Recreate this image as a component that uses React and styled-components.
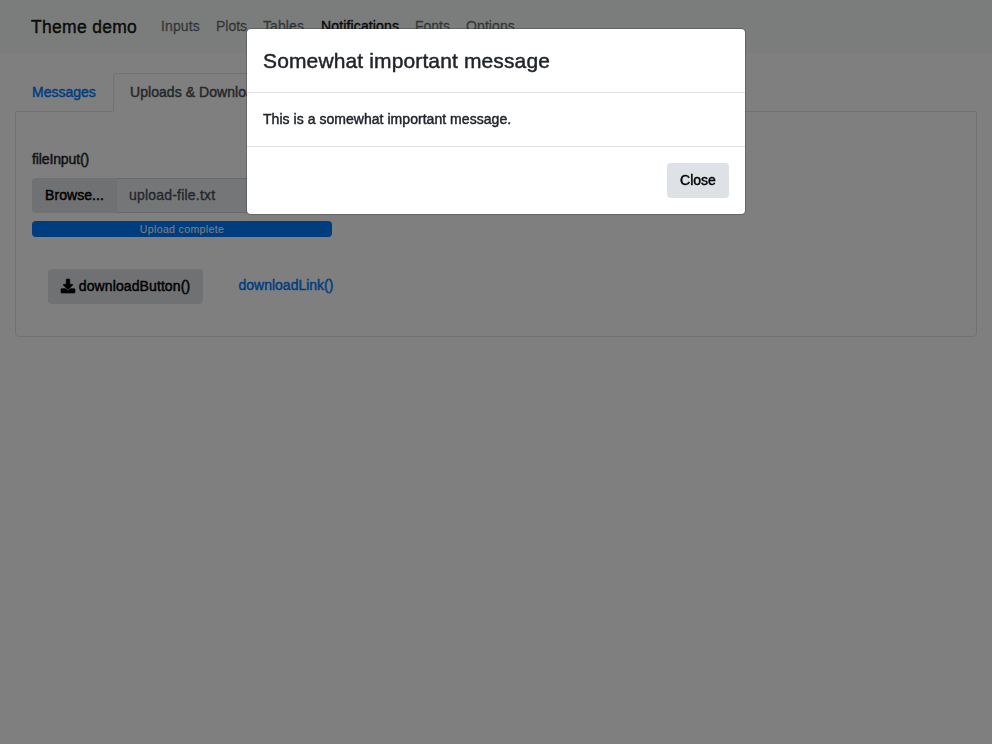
import React from "react";
import styled, { createGlobalStyle } from "styled-components";

const GlobalStyle = createGlobalStyle`
  *, *::before, *::after { box-sizing: border-box; }
  body {
    margin: 0;
    background: #fff;
    color: #212529;
    font: 14px/1.5 "Liberation Sans", Arial, sans-serif;
    -webkit-text-stroke: 0.45px currentColor;
    overflow: hidden;
  }
`;

const Text = styled.span`
  letter-spacing: ${(p) => p.$track || 0}px;
  white-space: nowrap;
`;

const Page = styled.div`
  min-height: 100vh;
`;

const Navbar = styled.nav`
  display: flex;
  align-items: center;
  height: 53px;
  padding: 0 31px;
  background: #f5faf8;
`;

const Brand = styled.a`
  width: 106px;
  margin-right: 16px;
  padding-top: 1px;
  font-size: 17.5px;
  color: rgba(0, 0, 0, 0.9);
  white-space: nowrap;
`;

const NavLink = styled.a`
  padding: 8px;
  width: ${(p) => p.$width}px;
  color: ${(p) => (p.$active ? "rgba(0, 0, 0, 0.9)" : "rgba(0, 0, 0, 0.5)")};
  -webkit-text-stroke-width: ${(p) => (p.$active ? 0.45 : 0.35)}px;
  white-space: nowrap;
`;

const Container = styled.main`
  padding: 20px 15px 0;
`;

const Tabs = styled.div`
  display: flex;
  height: 39px;
  margin-bottom: -1px;
  position: relative;
`;

const Tab = styled.a`
  padding: 8px 16px;
  border: 1px solid;
  border-color: ${(p) => (p.$active ? "#dee2e6 #dee2e6 #fff" : "transparent")};
  border-radius: 4px 4px 0 0;
  background: ${(p) => (p.$active ? "#fff" : "transparent")};
  color: ${(p) => (p.$active ? "#495057" : "#007bff")};
  width: ${(p) => p.$width}px;
  white-space: nowrap;
`;

const Panel = styled.section`
  height: 226px;
  padding: 37px 16px 0;
  border: 1px solid #dee2e6;
  border-radius: 0 0 4px 4px;
`;

const Label = styled.label`
  display: block;
  margin-bottom: 8px;
`;

const FileGroup = styled.div`
  display: flex;
  width: 300px;
  height: 35px;
`;

const Button = styled.button`
  display: flex;
  align-items: center;
  justify-content: center;
  gap: 4px;
  width: ${(p) => p.$width}px;
  height: 35px;
  padding: 0;
  border: 0;
  border-radius: ${(p) => (p.$joined ? "4px 0 0 4px" : "4px")};
  background: #dee2e6;
  color: #000;
  font: inherit;
  -webkit-text-stroke: inherit;
`;

const FileName = styled.div`
  flex: 1;
  padding: 6px 12px;
  border: 1px solid #ced4da;
  border-left: 0;
  border-radius: 0 4px 4px 0;
  background: #e9ecef;
  color: #495057;
  line-height: 21px;
  -webkit-text-stroke-width: 0.35px;
`;

const Progress = styled.div`
  width: 300px;
  height: 16px;
  margin-top: 8px;
  border-radius: 4px;
  background: #007bff;
  color: #fff;
  font-size: 10.5px;
  line-height: 16px;
  text-align: center;
  -webkit-text-stroke: 0;
`;

const Downloads = styled.div`
  display: flex;
  gap: 35.5px;
  margin: 32px 16px 0;
`;

const Link = styled.a`
  padding-top: 6px;
  color: #007bff;
`;

const Backdrop = styled.div`
  position: fixed;
  inset: 0;
  display: flex;
  justify-content: center;
  align-items: flex-start;
  padding-top: 28px;
  background: rgba(0, 0, 0, 0.5);
`;

const Dialog = styled.div`
  width: 500px;
  border: 1px solid rgba(0, 0, 0, 0.2);
  border-radius: 4.8px;
  background: #fff;
  background-clip: padding-box;
`;

const DialogHeader = styled.header`
  height: 64px;
  padding: 16px;
  border-bottom: 1px solid #dee2e6;
`;

const DialogTitle = styled.h4`
  margin: 0;
  font-size: 21px;
  font-weight: 400;
  line-height: 31px;
`;

const DialogBody = styled.div`
  height: 53px;
  padding: 16px;
`;

const DialogFooter = styled.footer`
  display: flex;
  justify-content: flex-end;
  height: 68px;
  padding: 16px;
  border-top: 1px solid #dee2e6;
`;

const IconSvg = styled.svg`
  width: 14px;
  height: 14px;
  margin-bottom: 2px;
  overflow: visible;
  fill: currentColor;
  stroke: currentColor;
  stroke-width: 22px;
`;

const DownloadIcon = () => (
  <IconSvg viewBox="0 0 512 512" aria-hidden="true">
    <path d="M216 0h80c13.300 0 24 10.700 24 24v168h87.700c17.800 0 26.700 21.500 14.100 34.100L269.700 378.300c-7.500 7.500-19.800 7.500-27.300 0L90.100 226.100c-12.600-12.600-3.700-34.100 14.100-34.100H192V24c0-13.300 10.700-24 24-24zm296 376v112c0 13.300-10.700 24-24 24H24c-13.300 0-24-10.700-24-24V376c0-13.300 10.700-24 24-24h146.700l49 49c20.100 20.100 52.500 20.100 72.600 0l49-49H488c13.300 0 24 10.700 24 24z" />
  </IconSvg>
);

const links = [
  { name: "Inputs", width: 55, track: 0.1 },
  { name: "Plots", width: 47 },
  { name: "Tables", width: 58, track: 0.1 },
  { name: "Notifications", width: 94, track: 0.14, active: true },
  { name: "Fonts", width: 51 },
  { name: "Options", width: 66, track: 0.1 },
];

export default function App() {
  return (
    <>
      <GlobalStyle />
      <Page>
        <Navbar>
          <Brand><Text $track={0.3}>Theme demo</Text></Brand>
          {links.map((l) => (
            <NavLink key={l.name} $width={l.width} $active={l.active}>
              <Text $track={l.track}>{l.name}</Text>
            </NavLink>
          ))}
        </Navbar>
        <Container>
          <Tabs>
            <Tab $width={98}><Text>Messages</Text></Tab>
            <Tab $active><Text $track={0.05}>Uploads &amp; Downloads</Text></Tab>
          </Tabs>
          <Panel>
            <Label><Text $track={-0.12}>fileInput()</Text></Label>
            <FileGroup>
              <Button $width={85} $joined><Text $track={0.05}>Browse...</Text></Button>
              <FileName><Text $track={0.2}>upload-file.txt</Text></FileName>
            </FileGroup>
            <Progress><Text $track={0.37}>Upload complete</Text></Progress>
            <Downloads>
              <Button $width={155}><DownloadIcon /><Text $track={0.1}>downloadButton()</Text></Button>
              <Link><Text>downloadLink()</Text></Link>
            </Downloads>
          </Panel>
        </Container>
      </Page>
      <Backdrop>
        <Dialog role="dialog">
          <DialogHeader><DialogTitle><Text $track={0.13}>Somewhat important message</Text></DialogTitle></DialogHeader>
          <DialogBody><Text $track={0.04}>This is a somewhat important message.</Text></DialogBody>
          <DialogFooter><Button $width={62}><Text>Close</Text></Button></DialogFooter>
        </Dialog>
      </Backdrop>
    </>
  );
}
